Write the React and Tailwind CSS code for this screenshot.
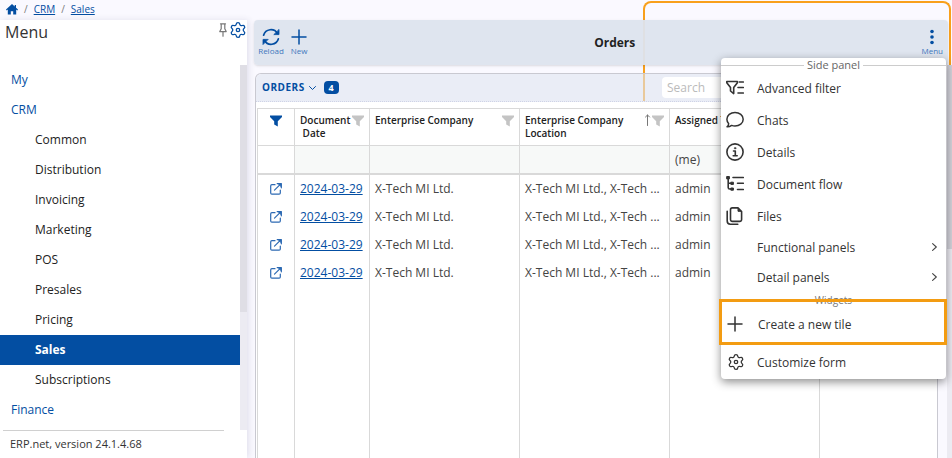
import React from "react";

const sidebarItems = [
  { label: "My", level: 0 },
  { label: "CRM", level: 0 },
  { label: "Common", level: 1 },
  { label: "Distribution", level: 1 },
  { label: "Invoicing", level: 1 },
  { label: "Marketing", level: 1 },
  { label: "POS", level: 1 },
  { label: "Presales", level: 1 },
  { label: "Pricing", level: 1 },
  { label: "Sales", level: 1, active: true },
  { label: "Subscriptions", level: 1 },
  { label: "Finance", level: 0 },
];

const orders = [1, 2, 3, 4].map((id) => ({
  id,
  date: "2024-03-29",
  company: "X-Tech MI Ltd.",
  location: "X-Tech MI Ltd., X-Tech ...",
  assigned: "admin",
}));

function Svg({ className, children, box = "0 0 24 24", width = 2 }) {
  return (
    <svg
      viewBox={box}
      className={className}
      fill="none"
      stroke="currentColor"
      strokeWidth={width}
      strokeLinecap="round"
      strokeLinejoin="round"
      aria-hidden="true"
    >
      {children}
    </svg>
  );
}

function HomeIcon() {
  return (
    <svg viewBox="0 0 12 11" className="h-[11px] w-3" fill="currentColor" aria-hidden="true">
      <path d="M6 0 0 5.6l.7.8L1.800 5.500V10.500H4.800V7.200h2.400v3.300h3V5.500l1.100.9.7-.8-2-1.900V1H8.700v1.500z" />
    </svg>
  );
}

function GearIcon({ className }) {
  return (
    <Svg className={className} width={1.7}>
      <path d="M9.671 4.136a2.34 2.34 0 0 1 4.659 0 2.34 2.34 0 0 0 3.319 1.915 2.34 2.34 0 0 1 2.33 4.033 2.34 2.34 0 0 0 0 3.831 2.34 2.34 0 0 1-2.33 4.033 2.34 2.34 0 0 0-3.319 1.915 2.34 2.34 0 0 1-4.659 0 2.34 2.34 0 0 0-3.32-1.915 2.34 2.34 0 0 1-2.33-4.033 2.34 2.34 0 0 0 0-3.831A2.34 2.34 0 0 1 6.35 6.051a2.34 2.34 0 0 0 3.319-1.915" />
      <circle cx="12" cy="12" r="2.300" />
    </Svg>
  );
}

function PinIcon() {
  return (
    <Svg className="h-[14px] w-2" box="0 0 8 14" width={1.2}>
      <path d="M1.500.8h5M2.200.8v5L.8 8.600h6.400L5.800 5.800v-5M4 8.600v4.600" />
    </Svg>
  );
}

function FunnelIcon({ className }) {
  return (
    <svg viewBox="0 0 12 12" className={className} fill="currentColor" aria-hidden="true">
      <path d="M0 .5h12v1.500L7.800 6.200v5.300L4.200 9.400V6.200L0 2z" />
    </svg>
  );
}

function ReloadIcon() {
  return (
    <Svg className="h-[18px] w-[18px]" box="0 0 18 18" width={1.7}>
      <path d="M1.600 7.200A7.600 7.600 0 0 1 15.500 5.500M16.400 10.800A7.600 7.600 0 0 1 2.500 12.500" />
      <path d="M17 1.800v4.800h-4.800zM1 16.200v-4.800h4.800z" fill="currentColor" strokeWidth="0.8" />
    </Svg>
  );
}

function PlusIcon({ className }) {
  return (
    <Svg className={className} box="0 0 16 16" width={1.5}>
      <path d="M8 1v14M1 8h14" />
    </Svg>
  );
}

function OpenIcon() {
  return (
    <Svg className="h-3 w-3" box="0 0 12 12" width={1.2}>
      <path d="M5 1.700H1.900A1.200 1.200 0 0 0 .7 2.900v7.100a1.200 1.200 0 0 0 1.200 1.200h7.200a1.200 1.200 0 0 0 1.200-1.200V7" />
      <path d="M4.500 7.200 10.300 1.400M7.200.7h4.100v4.100" />
      <path d="M8.300.7h3v3z" fill="currentColor" strokeWidth="0.6" />
    </Svg>
  );
}

function AdvancedFilterIcon() {
  return (
    <Svg className="h-[18px] w-[18px]" box="0 0 18 18" width={1.6}>
      <path d="M.8 2.500h10.600v1.300L7.700 8.600v6L4.500 12V8.600L.8 3.800z" />
      <path d="M13.300 3h4M12 8.500h5.300M12 14h5.300" />
    </Svg>
  );
}

function ChatIcon() {
  return (
    <Svg className="h-[18px] w-[18px]" box="0 0 18 18" width={1.5}>
      <path d="M1 15.800c1-.8 1.600-2 1.700-3.100C1.500 11.500.9 9.900.9 8.200.9 4.300 4.500 1.400 9 1.400s8.200 2.900 8.200 6.800S13.500 15 9 15c-1.200 0-2.300-.2-3.300-.6-1.300.9-3 1.500-4.700 1.400z" />
    </Svg>
  );
}

function InfoIcon() {
  return (
    <Svg className="h-[18px] w-[18px]" box="0 0 18 18" width={1.6}>
      <circle cx="9" cy="9" r="8.100" />
      <path d="M7.500 8h1.800v4.500M7.200 12.700h4" />
      <circle cx="9.100" cy="5.200" r="0.800" fill="currentColor" strokeWidth="0.6" />
    </Svg>
  );
}

function FlowIcon() {
  return (
    <Svg className="h-[18px] w-[18px]" box="0 0 18 18" width={1.600}>
      <path d="M2.200 3v9.500q0 1.500 1.500 1.500H6M2.200 8.300H6M7 2.500h10.300M11.500 8.300h5.800M11.500 14.500h5.800" />
      <path d="M1 1.500h2.400v2.400H1zM5.200 7.200h2.200v2.200H5.200zM5.200 13h2.200v2.200H5.200z" fill="currentColor" strokeWidth="1" />
    </Svg>
  );
}

function FilesIcon() {
  return (
    <Svg className="h-[18px] w-[18px]" box="0 0 18 18" width={1.600}>
      <path d="M6.300.9h5.700l3.600 3.600v8.100a1.800 1.800 0 0 1-1.800 1.800H6.300a1.800 1.800 0 0 1-1.800-1.800V2.700A1.800 1.800 0 0 1 6.300.9z" />
      <path d="M12 1.500v2.800h2.900z" fill="currentColor" strokeWidth="1" />
      <path d="M1.200 4.300v9.700a3.200 3.200 0 0 0 3.200 3.200h7.400" />
    </Svg>
  );
}

function ChevronRight() {
  return (
    <Svg className="h-2 w-[5px] text-[#444]" box="0 0 5 8" width={1.1}>
      <path d="M.6.600 4.300 4 .6 7.400" />
    </Svg>
  );
}

const sideActions = [
  { label: "Advanced filter", icon: <AdvancedFilterIcon /> },
  { label: "Chats", icon: <ChatIcon /> },
  { label: "Details", icon: <InfoIcon /> },
  { label: "Document flow", icon: <FlowIcon /> },
  { label: "Files", icon: <FilesIcon /> },
];

function Sidebar() {
  return (
    <aside className="z-10 flex w-[247px] shrink-0 flex-col bg-white shadow-[2px_0_6px_rgba(60,60,110,0.12)]">
      <div className="flex h-[45px] shrink-0 items-start justify-between pl-[5px]">
        <h1 className="text-base leading-6 text-[#333]">Menu</h1>
        <div className="flex items-center gap-[2px] pt-px">
          <button type="button" aria-label="Pin menu" className="text-[#777]">
            <PinIcon />
          </button>
          <button type="button" aria-label="Menu settings" className="text-[#034ea2]">
            <GearIcon className="h-[18px] w-[18px]" />
          </button>
        </div>
      </div>
      <div className="flex min-h-0 flex-1">
        <nav className="flex-1 overflow-hidden">
          <ul>
            {sidebarItems.map((item) => (
              <li key={item.label}>
                <a
                  href="#"
                  className={
                    "block h-[30px] text-xs leading-[30px] " +
                    (item.level === 0 ? "pl-[11px] text-[#034ea2] " : "pl-[35px] ") +
                    (item.active ? "bg-[#034ea2] font-bold text-white" : item.level === 1 ? "text-[#222]" : "")
                  }
                >
                  {item.label}
                </a>
              </li>
            ))}
          </ul>
        </nav>
        <div className="w-[7px] bg-[#ecebf2]">
          <div className="h-[247px] bg-[#dfdee5]" />
        </div>
      </div>
      <footer className="mr-[23px] ml-[3px] h-7 shrink-0 border-t border-[#d0d0d0] pl-[7px] text-[11px] leading-[26px] text-[#333]">
        ERP.net, version 24.1.4.68
      </footer>
    </aside>
  );
}

function Toolbar() {
  return (
    <header className="z-10 mr-1 flex h-[45px] shrink-0 rounded bg-[#dde4ee]/95 pl-1 text-[#034ea2] shadow-sm">
      <div className="flex items-start gap-[6px] pt-2">
        <button type="button" className="flex w-[26px] flex-col items-center">
          <ReloadIcon />
          <span className="text-[8px] leading-[10px] text-[#3f78bd]">Reload</span>
        </button>
        <button type="button" className="flex w-[18px] flex-col items-center">
          <span className="flex h-[18px] items-center">
            <PlusIcon className="h-4 w-4" />
          </span>
          <span className="text-[8px] leading-[10px] text-[#3f78bd]">New</span>
        </button>
      </div>
      <h2 className="flex-1 text-center text-xs leading-[45px] font-bold text-[#222]">Orders</h2>
      <div className="flex items-start pt-2 pr-[5px]">
        <button type="button" className="flex flex-col items-center">
          <svg viewBox="0 0 4 18" className="h-[18px] w-1" fill="currentColor" aria-hidden="true">
            <circle cx="2" cy="3.500" r="1.800" />
            <circle cx="2" cy="9" r="1.800" />
            <circle cx="2" cy="14.500" r="1.800" />
          </svg>
          <span className="text-[8px] leading-[10px] text-[#3f78bd]">Menu</span>
        </button>
      </div>
    </header>
  );
}

function HeadCell({ children, sorted, last }) {
  return (
    <th scope="col" className={"border-t border-b border-[#d9d9d9] p-0 align-top " + (last ? "" : "border-r")}>
      <div className="flex items-start justify-between px-[5px] pt-[5px] text-left text-[10px] leading-[13px] font-semibold text-[#222]">
        <span className="min-w-0 whitespace-pre">{children}</span>
        <span className="flex shrink-0 items-start text-[#c4c4c4]">
          {sorted && (
            <Svg className="mr-px h-3 w-[7px] text-[#777]" box="0 0 7 12" width={1}>
              <path d="M3.500 11.500V1M1.500 3l2-2 2 2" />
            </Svg>
          )}
          <FunnelIcon className="mt-px h-3 w-3" />
        </span>
      </div>
    </th>
  );
}

function OrdersTable() {
  const cell = "truncate border-r border-[#d9d9d9] px-[5px] py-0";
  const filterCell = "border-r border-b-2 border-[#d9d9d9] bg-[#f7f9f8] px-[5px] py-0";
  return (
    <table className="h-full w-full table-fixed border-separate border-spacing-0 border-l border-[#d9d9d9] bg-white text-xs text-[#444]">
      <colgroup>
        <col className="w-[37px]" />
        <col className="w-[75px]" />
        <col className="w-[150px]" />
        <col className="w-[150px]" />
        <col className="w-[150px]" />
        <col />
      </colgroup>
      <thead>
        <tr className="h-[38px]">
          <th scope="col" className="border-t border-r border-b border-[#d9d9d9] p-0 align-top">
            <button type="button" aria-label="Filter rows" className="mt-[6px] inline-block text-[#034ea2]">
              <FunnelIcon className="h-3 w-3" />
            </button>
          </th>
          <HeadCell>{"Document\n\u00a0Date"}</HeadCell>
          <HeadCell>Enterprise Company</HeadCell>
          <HeadCell sorted>{"Enterprise Company\nLocation"}</HeadCell>
          <HeadCell>Assigned To</HeadCell>
          <HeadCell last />
        </tr>
        <tr className="h-[29px]">
          <td className="border-r border-b-2 border-[#d9d9d9] p-0" />
          <td className={filterCell} />
          <td className={filterCell} />
          <td className={filterCell} />
          <td className={filterCell}>(me)</td>
          <td className="border-b-2 border-[#d9d9d9] bg-[#f7f9f8] p-0" />
        </tr>
      </thead>
      <tbody>
        {orders.map((o) => (
          <tr key={o.id} className="h-7">
            <td className="border-r border-[#d9d9d9] p-0">
              <a href="#" aria-label="Open order" className="flex justify-center text-[#2c69b3]">
                <OpenIcon />
              </a>
            </td>
            <td className={cell}>
              <a href="#" className="text-[#034ea2] underline">{o.date}</a>
            </td>
            <td className={cell}>{o.company}</td>
            <td className={cell}>{o.location}</td>
            <td className={cell}>{o.assigned}</td>
            <td />
          </tr>
        ))}
        <tr>
          <td className={cell} />
          <td className={cell} />
          <td className={cell} />
          <td className={cell} />
          <td className={cell} />
          <td />
        </tr>
      </tbody>
    </table>
  );
}

function OrdersPanel() {
  return (
    <section className="z-10 mt-2 mr-[9px] ml-px flex min-w-0 flex-1 flex-col rounded-t-md border border-b-0 border-[#c9c9d1]">
      <div className="flex h-7 shrink-0 items-center justify-between rounded-t-md border-b border-dotted border-[#cfd3e6] bg-[#dfe4f0]/60 pl-[6px]">
        <div className="flex items-center text-[#034ea2]">
          <button type="button" className="flex items-center gap-1 text-[10px] font-bold tracking-wider">
            ORDERS
            <Svg className="h-1 w-[7px]" box="0 0 7 4" width={1}>
              <path d="M.5.500l3 3 3-3" />
            </Svg>
          </button>
          <span className="ml-2 h-[13px] w-[15px] rounded bg-[#034ea2] text-center text-[9px] leading-[13px] font-bold text-white">4</span>
        </div>
        <input
          type="text"
          aria-label="Search orders"
          placeholder="Search"
          className="mr-[5px] h-[21px] w-[270px] rounded-sm bg-white px-[5px] text-xs text-[#333] placeholder:text-[#bbb]"
        />
      </div>
      <div className="min-h-0 flex-1 bg-white pt-[6px] pl-px">
        <OrdersTable />
      </div>
    </section>
  );
}

function MenuItem({ icon, label, height, arrow }) {
  return (
    <button type="button" role="menuitem" className={"flex w-full items-center pr-[9px] pl-[5px] text-left " + height}>
      <span className="flex w-[31px] shrink-0">{icon}</span>
      <span className="flex-1 pt-[2px]">{label}</span>
      {arrow && <ChevronRight />}
    </button>
  );
}

function ContextMenu() {
  return (
    <div
      role="menu"
      className="absolute top-[58px] right-[6px] z-20 w-[225px] rounded bg-white text-xs leading-4 text-[#333] shadow-[0_3px_10px_rgba(0,0,0,0.45)]"
    >
      <div className="flex h-[14px] items-center gap-[3px] text-[11px] text-[#666]">
        <span className="h-px flex-1 bg-[#ccc]" />
        Side panel
        <span className="h-px flex-1 bg-[#ccc]" />
      </div>
      {sideActions.map((a) => (
        <MenuItem key={a.label} icon={a.icon} label={a.label} height="h-8" />
      ))}
      <MenuItem label="Functional panels" height="h-[30px]" arrow />
      <MenuItem label="Detail panels" height="h-[30px]" arrow />
      <div className="h-[7px] text-center text-[10px] leading-4 text-[#777]">Widgets</div>
      <div className="relative -mr-px -ml-[2px] border-3 border-[#f39c12]">
        <MenuItem icon={<PlusIcon className="h-4 w-4" />} label="Create a new tile" height="h-10 pt-[3px]" />
      </div>
      <MenuItem icon={<GearIcon className="ml-px h-[18px] w-[18px]" />} label="Customize form" height="h-[34px]" />
    </div>
  );
}

export default function App() {
  return (
    <div className="relative flex h-screen flex-col overflow-hidden bg-[#faf9ff] font-['Open_Sans',sans-serif]">
      <nav aria-label="Breadcrumb" className="flex h-5 shrink-0 items-center gap-[6px] pb-[2px] pl-[6px] text-[10px] leading-[18px] text-[#034ea2]">
        <a href="#" aria-label="Home">
          <HomeIcon />
        </a>
        <span className="text-[#777]">/</span>
        <a href="#" className="underline">CRM</a>
        <span className="text-[#777]">/</span>
        <a href="#" className="underline">Sales</a>
      </nav>
      <div className="absolute top-px right-px h-[100px] w-[308px] rounded-t-lg border-2 border-b-0 border-[#f8a01c]" />
      <div className="flex min-h-0 flex-1">
        <Sidebar />
        <main className="flex min-w-0 flex-1 flex-col pl-[7px]">
          <Toolbar />
          <div className="flex min-h-0 flex-1">
            <OrdersPanel />
            <div className="z-10 w-[5px] bg-[#ecebf2]">
              <div className="h-[184px] bg-[#d3d2da]" />
            </div>
          </div>
        </main>
      </div>
      <ContextMenu />
    </div>
  );
}
